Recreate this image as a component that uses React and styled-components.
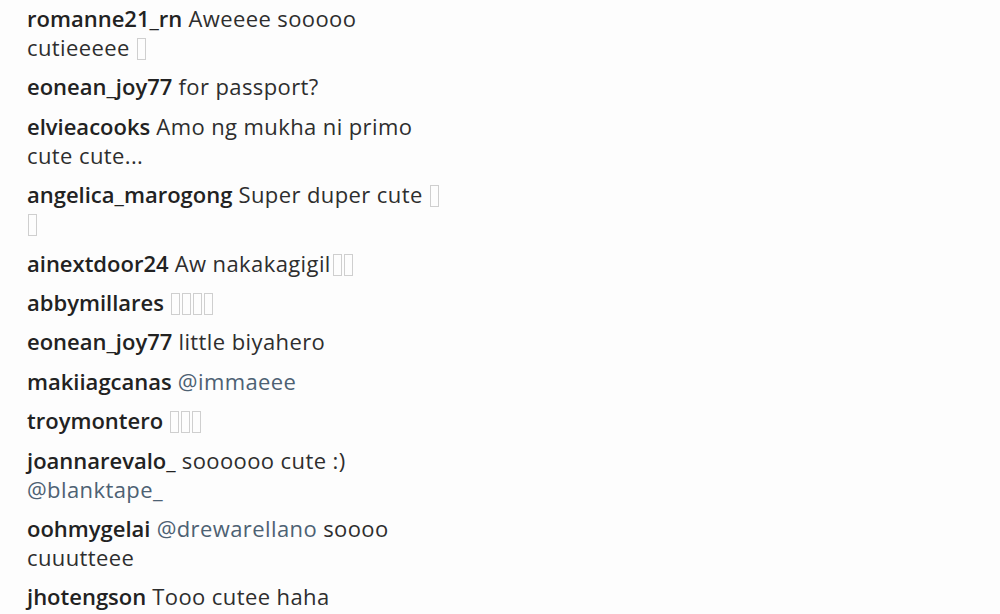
import styled, { createGlobalStyle } from 'styled-components';

const GlobalStyle = createGlobalStyle`
  html, body {
    margin: 0;
    padding: 0;
    background: #fdfdfd;
  }
`;

const Page = styled.div`
  padding: 4px 0 0 27px;
  font-family: 'Open Sans', 'Liberation Sans', sans-serif;
  font-size: 22px;
  letter-spacing: 0.4px;
  color: #2e2e2e;
`;

const List = styled.ul`
  list-style: none;
  margin: 0;
  padding: 0;
  width: 424px;
`;

const Comment = styled.li`
  line-height: 29px;
  margin-bottom: 10.4px;
`;

const User = styled.span`
  font-weight: 600;
  letter-spacing: 0;
  color: #222;
`;

const Mention = styled.span`
  color: #4d6173;
`;

// missing-glyph boxes where the emoji did not render
const Tofu = styled.span`
  display: inline-block;
  width: 7px;
  height: 20px;
  margin-left: ${(p) => (p.$tight ? '2px' : '1px')};
  border: 1px solid #cfcfcf;
  vertical-align: -4px;
`;

const Boxes = ({ n, tight }) => (
  <>
    {Array.from({ length: n }).map((_, i) => (
      <Tofu key={i} $tight={tight || i > 0} />
    ))}
  </>
);

export default function App() {
  return (
    <>
      <GlobalStyle />
      <Page>
        <List>
          <Comment>
            <User>romanne21_rn</User> Aweeee sooooo cutieeeee <Boxes n={1} />
          </Comment>
          <Comment>
            <User>eonean_joy77</User> for passport?
          </Comment>
          <Comment>
            <User>elvieacooks</User> Amo ng mukha ni primo cute cute...
          </Comment>
          <Comment>
            <User>angelica_marogong</User> Super duper cute <Boxes n={1} /> <Boxes n={1} />
          </Comment>
          <Comment>
            <User>ainextdoor24</User> Aw nakakagigil<Boxes n={2} tight />
          </Comment>
          <Comment>
            <User>abbymillares</User> <Boxes n={4} />
          </Comment>
          <Comment>
            <User>eonean_joy77</User> little biyahero
          </Comment>
          <Comment>
            <User>makiiagcanas</User> <Mention>@immaeee</Mention>
          </Comment>
          <Comment>
            <User>troymontero</User> <Boxes n={3} />
          </Comment>
          <Comment>
            <User>joannarevalo_</User> soooooo cute :) <Mention>@blanktape_</Mention>
          </Comment>
          <Comment>
            <User>oohmygelai</User> <Mention>@drewarellano</Mention> soooo cuuutteee
          </Comment>
          <Comment>
            <User>jhotengson</User> Tooo cutee haha
          </Comment>
        </List>
      </Page>
    </>
  );
}
